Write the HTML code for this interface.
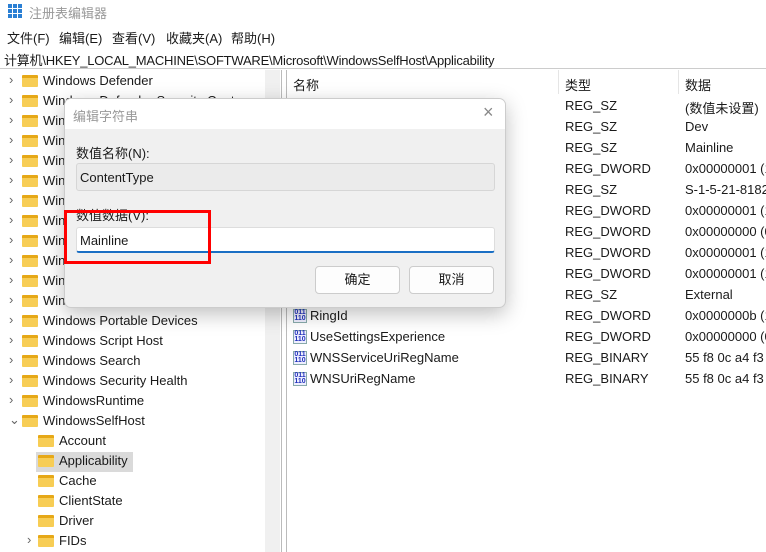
<!DOCTYPE html><html><head><meta charset="utf-8"><style>
*{margin:0;padding:0;box-sizing:border-box}
body{width:766px;height:552px;overflow:hidden;background:#fff;font-family:"Liberation Sans","Noto Sans CJK SC",sans-serif;font-size:13px;color:#1a1a1a;position:relative}
.a{position:absolute;white-space:nowrap}
.fold{position:absolute;width:16px;height:12px;background:#f7cd55;border-top:3px solid #e6a817;border-radius:1px}
.chev{position:absolute;font-size:13px;color:#666}
.ico{position:absolute;width:14px;height:14px;border:1px solid #8aa;background:#eef;font-size:7px;line-height:6px;color:#23b;font-weight:bold;text-align:center}
</style></head><body>
<div class="a" style="left:8px;top:4px;width:14px;height:14px;background:
linear-gradient(90deg,transparent 4px,#fff 4px,#fff 5px,transparent 5px,transparent 9px,#fff 9px,#fff 10px,transparent 10px),
linear-gradient(180deg,transparent 4px,#fff 4px,#fff 5px,transparent 5px,transparent 9px,#fff 9px,#fff 10px,transparent 10px),#2a7fd4"></div>
<div class="a" style="left:29px;top:3px;color:#999">注册表编辑器</div>
<div class="a" style="left:7px;top:28px">文件(F)</div>
<div class="a" style="left:59px;top:28px">编辑(E)</div>
<div class="a" style="left:112px;top:28px">查看(V)</div>
<div class="a" style="left:166px;top:28px">收藏夹(A)</div>
<div class="a" style="left:231px;top:28px">帮助(H)</div>
<div class="a" style="left:0;top:48px;width:766px;height:21px;border-bottom:1px solid #ccc"></div>
<div class="a" style="left:4px;top:50px;letter-spacing:-0.22px">计算机\HKEY_LOCAL_MACHINE\SOFTWARE\Microsoft\WindowsSelfHost\Applicability</div>
<div class="a" style="left:265px;top:70px;width:15px;height:482px;background:#f0f0f0"></div>
<div class="a" style="left:281px;top:70px;width:6px;height:482px;border-left:1px solid #bbb;border-right:1px solid #bbb"></div>
<div class="a" style="left:558px;top:70px;height:24px;border-left:1px solid #e5e5e5"></div>
<div class="a" style="left:678px;top:70px;height:24px;border-left:1px solid #e5e5e5"></div>
<div class="a" style="left:293px;top:75px">名称</div>
<div class="a" style="left:565px;top:75px">类型</div>
<div class="a" style="left:685px;top:75px">数据</div>
<div id="tree"></div><div id="list"></div>
<div class="a" style="left:64px;top:98px;width:442px;height:210px;background:#f0f0f0;border:1px solid #ccc;border-radius:7px;box-shadow:0 6px 20px rgba(0,0,0,.25);overflow:hidden">
<div style="height:30px;background:#fff"></div>
<div class="a" style="left:8px;top:7px;color:#999">编辑字符串</div>
<div class="a" style="left:418px;top:3px;color:#888;font-size:18px">×</div>
<div class="a" style="left:11px;top:44px">数值名称(N):</div>
<div class="a" style="left:11px;top:64px;width:419px;height:28px;background:#ebebeb;border:1px solid #d6d6d6;border-radius:3px;padding:6px 3px">ContentType</div>
<div class="a" style="left:11px;top:106px">数值数据(V):</div>
<div class="a" style="left:11px;top:128px;width:419px;height:26px;background:#fff;border:1px solid #ddd;border-bottom:2px solid #1a6fc4;border-radius:3px;padding:5px 3px">Mainline</div>
<div class="a" style="left:250px;top:167px;width:85px;height:28px;background:#fdfdfd;border:1px solid #ccc;border-radius:4px;text-align:center;line-height:26px">确定</div>
<div class="a" style="left:344px;top:167px;width:85px;height:28px;background:#fdfdfd;border:1px solid #ccc;border-radius:4px;text-align:center;line-height:26px">取消</div>
</div>
<div class="a" style="left:64px;top:210px;width:147px;height:54px;border:3px solid #f00"></div>
<script>
var t=["Windows Defender","Windows Defender Security Center","Windows","Windows","Windows","Windows","Windows","Windows","Windows","Windows","Windows","Windows","Windows Portable Devices","Windows Script Host","Windows Search","Windows Security Health","WindowsRuntime","WindowsSelfHost"],h="";
t.forEach(function(s,i){var y=81+i*20;h+='<div class="chev" style="left:9px;top:'+(y-9)+'px">'+(i==17?'⌄':'›')+'</div><div class="fold" style="left:22px;top:'+(y-6)+'px"></div><div class="a" style="left:43px;top:'+(y-8)+'px">'+s+'</div>'});
["Account","Applicability","Cache","ClientState","Driver","FIDs"].forEach(function(s,i){var y=441+i*20;if(i==1)h+='<div class="a" style="left:36px;top:452px;width:97px;height:20px;background:#dadada"></div>';if(i==5)h+='<div class="chev" style="left:27px;top:'+(y-9)+'px">›</div>';h+='<div class="fold" style="left:38px;top:'+(y-6)+'px"></div><div class="a" style="left:59px;top:'+(y-8)+'px">'+s+'</div>'});
document.getElementById('tree').innerHTML=h;
var ty=["REG_SZ","REG_SZ","REG_SZ","REG_DWORD","REG_SZ","REG_DWORD","REG_DWORD","REG_DWORD","REG_DWORD","REG_SZ","REG_DWORD","REG_DWORD","REG_BINARY","REG_BINARY"],
da=["(数值未设置)","Dev","Mainline","0x00000001 (1)","S-1-5-21-8182","0x00000001 (1)","0x00000000 (0)","0x00000001 (1)","0x00000001 (1)","External","0x0000000b (11)","0x00000000 (0)","55 f8 0c a4 f3","55 f8 0c a4 f3"],
nm={10:"RingId",11:"UseSettingsExperience",12:"WNSServiceUriRegName",13:"WNSUriRegName"};h="";
ty.forEach(function(s,i){var y=106+i*21;h+='<div class="a" style="left:565px;top:'+(y-8)+'px">'+s+'</div><div class="a" style="left:685px;top:'+(y-8)+'px">'+da[i]+'</div>';if(nm[i])h+='<div class="ico" style="left:293px;top:'+(y-7)+'px">011<br>110</div><div class="a" style="left:310px;top:'+(y-8)+'px">'+nm[i]+'</div>'});
document.getElementById('list').innerHTML=h;
</script>
</body></html>
